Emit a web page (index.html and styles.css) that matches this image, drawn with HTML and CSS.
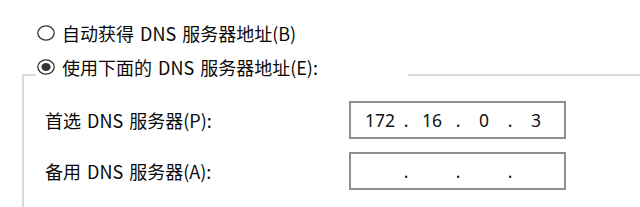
FILE: index.html
```html
<!DOCTYPE html>
<html lang="zh-CN">
<head>
<meta charset="utf-8">
<link rel="stylesheet" href="styles.css">
</head>
<body>
<div class="option">
  <svg class="radio" width="18" height="16" viewBox="0 0 18 16"><ellipse cx="9" cy="8" rx="8.2" ry="7.2" fill="#fff" stroke="#333" stroke-width="1.3"/></svg>
  <span>自动获得 DNS 服务器地址(B)</span>
</div>
<fieldset class="group">
  <legend class="option legend">
    <svg class="radio" width="18" height="16" viewBox="0 0 18 16"><ellipse cx="9" cy="8" rx="8.2" ry="7.2" fill="#fff" stroke="#333" stroke-width="1.3"/><ellipse cx="9" cy="8" rx="4.6" ry="4" fill="#333"/></svg>
    <span>使用下面的 DNS 服务器地址(E):</span>
  </legend>
  <div class="rows">
    <div class="label">首选 DNS 服务器(P):</div>
    <div class="ip">
      <span class="seg">172</span><span class="dot">.</span><span class="seg">16</span><span class="dot">.</span><span class="seg">0</span><span class="dot">.</span><span class="seg">3</span>
    </div>
    <div class="label">备用 DNS 服务器(A):</div>
    <div class="ip">
      <span class="seg"></span><span class="dot">.</span><span class="seg"></span><span class="dot">.</span><span class="seg"></span><span class="dot">.</span><span class="seg"></span>
    </div>
  </div>
</fieldset>
</body>
</html>
```
FILE: styles.css
```css
html, body {
  margin: 0;
  padding: 0;
  background: #fff;
}
body {
  width: 640px;
  height: 207px;
  overflow: hidden;
  font-family: "Noto Sans CJK SC", "Noto Sans", sans-serif;
  font-size: 18px;
  word-spacing: 2px;
  color: #0a0a0a;
}
.option {
  display: flex;
  align-items: center;
  height: 20px;
  line-height: 20px;
  white-space: nowrap;
}
body > .option {
  margin: 23px 0 0 37px;
}
.radio {
  flex: none;
  margin-right: 7px;
}
.group {
  margin: 14px 0 0 22px;
  padding: 8px 0 17px 12px;
  border: 0;
  border-top: 2px solid #dadada;
  border-left: 2px solid #dadada;
  min-width: 0;
}
.legend {
  box-sizing: border-box;
  width: 372px;
  height: 36px;
  padding: 0 0 16px 1px;
  align-items: flex-start;
}
.legend .radio {
  margin-top: 2px;
}
.rows {
  display: grid;
  grid-template-columns: 304px 217px;
  grid-auto-rows: 38px;
  row-gap: 13px;
  padding-left: 9px;
  align-items: center;
}
.label {
  white-space: nowrap;
}
.ip {
  box-sizing: border-box;
  height: 38px;
  border: 2px solid #8f8f8f;
  display: flex;
  align-items: center;
  padding-left: 7px;
  font-family: "Noto Sans", sans-serif;
  font-size: 17.5px;
  word-spacing: 0;
  color: #111;
}
.seg {
  width: 44px;
  text-align: center;
}
.dot {
  width: 8px;
  text-align: center;
}
```
